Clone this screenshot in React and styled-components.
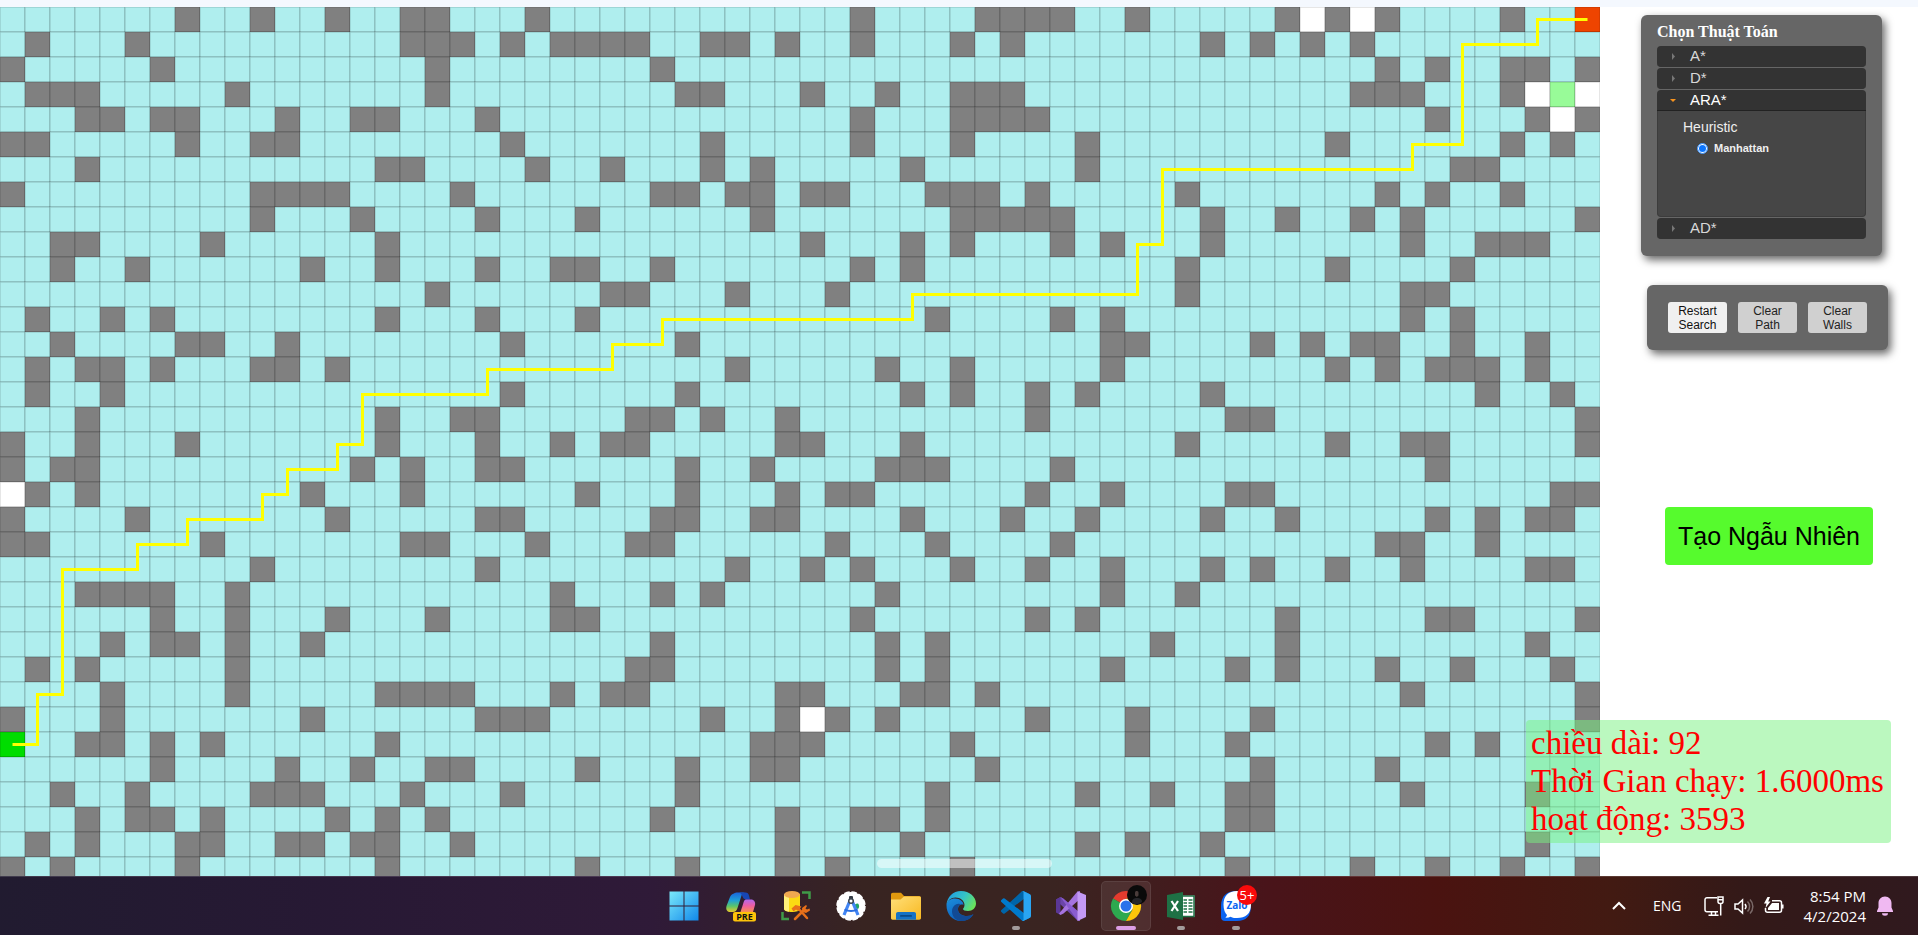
import React, { useState } from 'react';
import styled, { createGlobalStyle, css } from 'styled-components';

const GlobalStyle = createGlobalStyle`
  *, *::before, *::after { box-sizing: border-box; }
  body { margin: 0; background: #fff; overflow: hidden; }
`;

/* ---------- Map data ---------- */

const CELL = 25;
const COLS = 64;

const WALLS = [
  [7, 10, 13, 16, 17, 21, 34, 39, 40, 41, 42, 45, 51, 53, 55, 60],
  [1, 5, 16, 17, 18, 20, 22, 23, 24, 25, 28, 29, 31, 34, 38, 40, 48, 50, 52, 54],
  [0, 6, 17, 26, 55, 57, 60, 61, 63],
  [1, 2, 3, 9, 17, 27, 28, 32, 35, 38, 39, 40, 54, 55, 56, 60],
  [3, 4, 6, 7, 11, 14, 15, 19, 34, 38, 39, 40, 41, 57, 61, 63],
  [0, 1, 7, 10, 11, 20, 28, 34, 38, 43, 53, 60, 62],
  [3, 15, 16, 21, 24, 28, 30, 36, 43, 58, 59],
  [0, 10, 11, 12, 13, 18, 26, 27, 29, 30, 32, 33, 37, 38, 39, 41, 47, 55, 57, 60],
  [10, 14, 19, 23, 30, 38, 39, 40, 41, 42, 48, 51, 54, 56, 63],
  [2, 3, 8, 15, 32, 36, 38, 42, 44, 48, 56, 59, 60, 61],
  [2, 5, 12, 15, 19, 22, 23, 26, 34, 36, 47, 53, 58],
  [17, 24, 25, 29, 33, 47, 56, 57],
  [1, 4, 6, 15, 19, 23, 37, 42, 44, 56, 58],
  [2, 7, 8, 11, 20, 27, 44, 45, 50, 52, 54, 55, 58, 61],
  [1, 3, 4, 6, 10, 11, 13, 29, 35, 38, 44, 53, 55, 57, 58, 59, 61],
  [1, 4, 20, 27, 36, 38, 41, 43, 48, 59, 62],
  [3, 15, 18, 19, 25, 26, 28, 31, 41, 49, 50, 63],
  [0, 3, 7, 15, 19, 22, 24, 25, 31, 32, 36, 47, 53, 56, 57, 63],
  [0, 2, 3, 14, 16, 19, 20, 27, 30, 35, 36, 37, 42, 57],
  [1, 3, 12, 16, 23, 27, 31, 33, 34, 41, 44, 49, 50, 62, 63],
  [0, 5, 13, 19, 20, 26, 27, 30, 31, 36, 40, 43, 48, 51, 57, 59, 61, 62],
  [0, 1, 8, 16, 17, 21, 25, 26, 33, 37, 42, 55, 56, 59],
  [10, 19, 29, 32, 34, 38, 41, 44, 48, 50, 53, 56, 61, 62],
  [3, 4, 5, 6, 9, 22, 26, 28, 35, 44, 47],
  [6, 9, 13, 17, 22, 23, 34, 41, 43, 51, 57, 58, 63],
  [4, 6, 7, 9, 12, 26, 35, 37, 46, 51, 61],
  [1, 3, 9, 25, 26, 35, 37, 44, 49, 51, 55, 58, 62],
  [4, 9, 15, 16, 17, 18, 22, 24, 25, 31, 36, 37, 32, 39, 56, 63],
  [0, 4, 12, 19, 20, 21, 28, 31, 33, 35, 41, 45, 50, 63],
  [3, 4, 6, 8, 15, 30, 31, 32, 38, 45, 49, 57, 59],
  [6, 11, 14, 17, 18, 23, 27, 30, 31, 39, 50, 55],
  [2, 5, 10, 11, 12, 16, 20, 27, 37, 43, 46, 49, 50, 56, 61],
  [3, 5, 6, 8, 13, 15, 17, 26, 31, 34, 35, 37, 49, 50],
  [1, 3, 7, 8, 11, 12, 14, 15, 18, 31, 36, 43, 45, 48, 61],
  [0, 2, 7, 15, 23, 27, 31, 33, 38, 49, 54, 57, 60, 63],
];

const ROWS = WALLS.length;

const SPECIAL = {
  '0,29': '#0d0',
  '63,0': '#e40',
  '62,3': '#98fb98',
  '52,0': '#fff',
  '54,0': '#fff',
  '61,3': '#fff',
  '63,3': '#fff',
  '62,4': '#fff',
  '0,19': '#fff',
  '32,28': '#fff',
};

const PATH = [
  [0, 29], [1, 29], [1, 27], [2, 27], [2, 22], [5, 22], [5, 21], [7, 21], [7, 20],
  [10, 20], [10, 19], [11, 19], [11, 18], [13, 18], [13, 17], [14, 17], [14, 15],
  [19, 15], [19, 14], [24, 14], [24, 13], [26, 13], [26, 12], [36, 12], [36, 11],
  [45, 11], [45, 9], [46, 9], [46, 6], [56, 6], [56, 5], [58, 5], [58, 1], [61, 1],
  [61, 0], [63, 0],
];

function cellColor(x, y) {
  if (SPECIAL[`${x},${y}`]) return SPECIAL[`${x},${y}`];
  return WALLS[y].includes(x) ? '#808080' : '#afeeee';
}

/* ---------- Page ---------- */

const Page = styled.div`
  display: flex;
  flex-direction: column;
  height: 100vh;
`;

const TopStrip = styled.div`
  flex: none;
  height: 7px;
  background: #f4f8fe;
`;

const Main = styled.main`
  position: relative;
  display: flex;
  flex: 1;
  min-height: 0;
  overflow: hidden;
`;

const MapArea = styled.section`
  flex: 1;
  min-width: 0;
  overflow: hidden;
`;

const MapDrawing = styled.svg`
  display: block;
  overflow: visible;
`;

const ScrollHandle = styled.div`
  position: absolute;
  bottom: 8px;
  left: calc(50% - 82px);
  width: 175px;
  height: 9px;
  border-radius: 5px;
  background: rgba(255, 255, 255, 0.5);
`;

const Sidebar = styled.aside`
  position: relative;
  display: flex;
  flex: 0 0 318px;
  flex-direction: column;
  align-items: flex-start;
  padding: 8px 0 0 41px;
  background: #fff;
`;

const panel = css`
  background: #666;
  border-radius: 6px;
  box-shadow: 3px 4px 8px rgba(0, 0, 0, 0.6);
`;

const AlgorithmPanel = styled.section`
  ${panel}
  width: 241px;
  padding: 8px 16px 17px;
`;

const PanelTitle = styled.h1`
  margin: 0 0 5px;
  color: #fff;
  font: bold 16px/18px 'Liberation Serif', serif;
`;

const Accordion = styled.div`
  display: flex;
  flex-direction: column;
  gap: 1px;
  font-family: 'Liberation Sans', sans-serif;
`;

const AccordionHeader = styled.button`
  display: flex;
  align-items: center;
  width: 100%;
  height: 21px;
  padding: 0 0 0 12px;
  border: 0;
  border-bottom: 1px solid ${(p) => (p.$open ? '#222' : '#333')};
  border-radius: ${(p) => (p.$open ? '4px 4px 0 0' : '4px')};
  background: #333;
  color: ${(p) => (p.$open ? '#fff' : '#d8d8d8')};
  font: 15px/18px 'Liberation Sans', sans-serif;
  cursor: pointer;
`;

const Caret = styled.svg`
  flex: none;
  width: 8px;
  height: 8px;
  margin-right: 13px;
  fill: ${(p) => (p.$open ? '#f7931e' : '#777')};
`;

const AccordionBody = styled.div`
  height: 106px;
  padding: 7px 25px;
  border: 1px solid #3c3c3c;
  border-top: 0;
  border-radius: 0 0 4px 4px;
  background: #464646;
  color: #eee;
`;

const OptionTitle = styled.h2`
  margin: 0 0 5px;
  font: 14px/18px 'Liberation Sans', sans-serif;
`;

const OptionLabel = styled.label`
  display: flex;
  align-items: center;
  gap: 6px;
  padding-left: 14px;
  font: bold 11px/14px 'Liberation Sans', sans-serif;
`;

const Radio = styled.input`
  appearance: none;
  width: 11px;
  height: 11px;
  margin: 0;
  border: 1px solid #5aa5ff;
  border-radius: 50%;
  background: #0b75ff;
  box-shadow: inset 0 0 0 1px #fff;
`;

const ActionPanel = styled.section`
  ${panel}
  display: flex;
  gap: 11px;
  width: 241px;
  margin: 29px 0 0 6px;
  padding: 17px 21px;
`;

const ActionButton = styled.button`
  flex: 1;
  height: 31px;
  padding: 0;
  border: 0;
  border-radius: 3px;
  background: ${(p) => (p.$primary ? '#f0f0f0' : '#d0d0d0')};
  color: ${(p) => (p.$primary ? '#111' : '#222')};
  font: 12px/14px 'Liberation Sans', sans-serif;
`;

const RandomButton = styled.button`
  width: 208px;
  height: 58px;
  margin: 157px 0 0 24px;
  padding: 0;
  border: 0;
  border-radius: 4px;
  background: #56fb2d;
  color: #000;
  font: 25px/30px 'Liberation Sans', sans-serif;
`;

const Stats = styled.div`
  position: absolute;
  right: 27px;
  bottom: 33px;
  width: 365px;
  padding: 4px 5px 5px;
  border-radius: 4px;
  background: rgba(120, 241, 128, 0.5);
  color: #f00;
  font: 33px/38px 'Liberation Serif', serif;
  white-space: nowrap;
`;

const StatLine = styled.p`
  margin: 0;
`;

/* ---------- Taskbar ---------- */

const Taskbar = styled.footer`
  display: grid;
  grid-template-columns: 1fr auto 1fr;
  align-items: center;
  flex: none;
  height: 59px;
  border-top: 1px solid rgba(255, 255, 255, 0.14);
  background: linear-gradient(
    90deg, #211b30 0%, #271934 17%, #2f1a38 34%, #382421 45%, #3a2421 55%,
    #49141a 66%, #4a1310 75%, #421a12 84%, #331918 91%, #30191e 100%
  );
  color: #fff;
  font-family: 'Open Sans', 'Noto Sans', sans-serif;
`;

const AppList = styled.nav`
  display: flex;
  grid-column: 2;
  gap: 5px;
  padding-left: 2px;
`;

const AppButton = styled.button`
  position: relative;
  display: flex;
  align-items: center;
  justify-content: center;
  width: 50px;
  height: 50px;
  padding: 0;
  border: 1px solid ${(p) => (p.$state === 'active' ? 'rgba(255,255,255,0.08)' : 'transparent')};
  border-radius: 5px;
  background: ${(p) => (p.$state === 'active' ? 'rgba(255,255,255,0.08)' : 'transparent')};

  &:first-child {
    margin-right: 2px;
  }

  &::after {
    content: '';
    display: ${(p) => (p.$state ? 'block' : 'none')};
    position: absolute;
    bottom: 0;
    width: ${(p) => (p.$state === 'active' ? '20px' : '8px')};
    height: 4px;
    border-radius: 2px;
    background: ${(p) => (p.$state === 'active' ? '#dc9ee6' : '#a39b9b')};
  }
`;

const AppIcon = styled.svg`
  width: 30px;
  height: 30px;
  overflow: visible;
`;

const AppBadge = styled.span`
  position: absolute;
  top: 3px;
  right: 3px;
  width: 20px;
  height: 20px;
  border-radius: 50%;
  background: #f80b0b;
  color: #fff;
  font: 13px/20px 'Open Sans', sans-serif;
  text-align: center;
`;

const Tray = styled.div`
  display: flex;
  grid-column: 3;
  align-items: center;
  justify-self: end;
  padding-right: 24px;
`;

const TrayButton = styled.button`
  display: flex;
  align-items: center;
  gap: ${(p) => p.$inner || 10}px;
  margin: 0 0 0 ${(p) => p.$gap}px;
  padding: 0;
  border: 0;
  background: none;
  color: #fff;
  font: ${(p) => p.$size || 14}px/20px 'Open Sans', 'Noto Sans', sans-serif;
  text-align: right;
`;

const TrayIcon = styled.svg`
  width: ${(p) => p.$w || 20}px;
  height: 20px;
  fill: none;
  stroke: #fff;
  stroke-width: 1.5;
`;

const APPS = [
  {
    name: 'Start',
    icon: (
      <>
        <defs>
          <linearGradient id="win" gradientUnits="userSpaceOnUse" x1="0" y1="0" x2="30" y2="30">
            <stop offset="0" stopColor="#7cebfb" />
            <stop offset="1" stopColor="#0f86ea" />
          </linearGradient>
        </defs>
        <path fill="url(#win)" d="M.5 .5h14v14h-14zM15.5 .5h14v14h-14zM.5 15.5h14v14h-14zM15.5 15.5h14v14h-14z" />
      </>
    ),
  },
  {
    name: 'Copilot',
    icon: (
      <>
        <defs>
          <linearGradient id="cpA" x1="0" y1="0" x2="0" y2="1">
            <stop offset="0" stopColor="#1a66dd" />
            <stop offset=".4" stopColor="#1fa0d8" />
            <stop offset=".7" stopColor="#5ac46b" />
            <stop offset="1" stopColor="#e9c929" />
          </linearGradient>
          <linearGradient id="cpB" x1="0" y1="0" x2="0" y2="1">
            <stop offset="0" stopColor="#b268ee" />
            <stop offset=".5" stopColor="#ee5ea1" />
            <stop offset="1" stopColor="#f79050" />
          </linearGradient>
        </defs>
        <path fill="url(#cpA)" d="M8 2.500c1-.8 2-1 3.500-1h8c-2.500 0-3.500 1.500-4.300 4L11.500 17c-.8 2.700-2 4-4.500 4H4.500c-3 0-5-2-4-6L4 6c.8-2 2-3 4-3.500z" />
        <path fill="#1746b4" d="M12 1.500h7.500c2 0 3 1.200 3.500 3l1 4h-3c-2 0-3.500-.5-4.300-2.500-.8-2.500-2-4.500-4.700-4.500z" />
        <path fill="url(#cpB)" d="M20 8.500h5c3 0 4.700 2.500 4 5.500L27 21H14.500l3.200-10c.5-1.500 1-2.500 2.300-2.500z" />
        <rect x="7" y="21" width="23" height="9.500" rx="2" fill="#fdc30a" />
        <text x="18.500" y="29" textAnchor="middle" fontFamily="Open Sans, sans-serif" fontWeight="700" fontSize="9" fill="#111">PRE</text>
      </>
    ),
  },
  {
    name: 'SQL Server Data Tools',
    icon: (
      <>
        <path fill="#fbd913" d="M3 3v15c0 2 4 3 8 3s8-1 8-3V3z" />
        <path fill="#fff07a" d="M3 3v15c0 1.200 2 2.300 5 2.700V3z" />
        <ellipse cx="11" cy="3.500" rx="8" ry="3.500" fill="#f0a850" />
        <path fill="none" stroke="#3f9b48" strokeWidth="2.500" d="M21 1.500h7.500V8M1.500 21v7H8" />
        <path fill="none" stroke="#e8701a" strokeWidth="2.500" strokeLinecap="round" d="M14 28l9-9M17 17l9 10" />
        <path fill="#e8701a" d="M10.500 17.500l4-3.500 6 1.500-3.500 4.500-2-1.500-2.500 2zM21 17l4-3 1 1-1.500 2.500 1.500 1 2.500-1 .5 2-4 2.500-3.500-1z" />
      </>
    ),
  },
  {
    name: 'Android Studio',
    icon: (
      <>
        <circle cx="15" cy="15" r="14" fill="#fff" />
        <circle cx="15" cy="15" r="14" fill="none" stroke="#fff" strokeWidth="1.500" strokeDasharray="5.500 1.830" />
        <path fill="#21a565" d="M18 16.500a4 4 0 0 1 4-4c1.500 1.500 1.500 4 0 5.500z" />
        <path fill="none" stroke="#4285f4" strokeWidth="3.200" d="M13.800 10L8 24M16.200 10L22 24" />
        <path fill="none" stroke="#2a6de0" strokeWidth="2" d="M8.500 18.500c3.500 2 9.500 2 13 0" />
        <rect x="13" y="5" width="4" height="4" rx="1" fill="#333a44" />
        <circle cx="15" cy="10" r="3" fill="#3c4650" />
        <circle cx="15" cy="10" r="1.500" fill="#fff" />
      </>
    ),
  },
  {
    name: 'File Explorer',
    icon: (
      <>
        <defs>
          <linearGradient id="fold" x1="0" y1="0" x2="1" y2="1">
            <stop offset="0" stopColor="#ffe07a" />
            <stop offset="1" stopColor="#f8b820" />
          </linearGradient>
        </defs>
        <path fill="#e0990f" d="M0 3.500C0 2.500.8 1.800 1.800 1.800H10l3 3.200h15c1 0 2 .8 2 2v6H0z" />
        <path fill="url(#fold)" d="M0 8.500h9.500L13 5.500h15.500c.8 0 1.500.6 1.500 1.500v20c0 1-.8 1.700-1.700 1.700H1.700C.7 28.700 0 28 0 27z" />
        <path fill="#1672c4" d="M5 28.700V23c0-1.200.8-2 2-2h16c1.200 0 2 .8 2 2v5.700z" />
        <rect x="9" y="24" width="12" height="1.800" rx=".9" fill="#0b4a86" />
      </>
    ),
  },
  {
    name: 'Edge',
    icon: (
      <>
        <defs>
          <linearGradient id="edA" x1="0" y1=".2" x2="1" y2=".6">
            <stop offset="0" stopColor="#1f9be2" />
            <stop offset=".55" stopColor="#35c4c6" />
            <stop offset="1" stopColor="#6be35a" />
          </linearGradient>
          <linearGradient id="edB" x1="0" y1="0" x2=".6" y2="1">
            <stop offset="0" stopColor="#1b8ede" />
            <stop offset="1" stopColor="#0c5cb8" />
          </linearGradient>
        </defs>
        <path fill="url(#edB)" d="M.5 14C1 10 4.500 7.500 9 7.500c5 0 8.500 3 8.500 6.500-1.500-1-5.500-.5-5.500 4.500 0 4 4 6.500 9 6.500 3 0 5-1 6.500-2C25 27.500 20.500 30 15 30 6.500 30 .3 23 .5 14z" />
        <path fill="#124a94" d="M12 18.500c-.2-3 1.200-5 3-5.200-3.500-2-9 1-9 7.200 0 5 4 9.500 9.500 9.500 5 0 9.500-2.500 12-7-1.500 1-3.500 2-6.500 2-5 0-9-2.500-9-6.500z" />
        <path fill="url(#edA)" d="M.5 14C1 6 7 0 15 0c8.500 0 15 6 15 12.500 0 4.500-3.500 7.500-8 7.500-3 0-5-1-5-2 0-.8 1.500-1.500 1.500-4 0-4-4-7.500-9-7.500-4.500 0-8 3-9 7.500z" />
      </>
    ),
  },
  {
    name: 'Visual Studio Code',
    state: 'open',
    icon: (
      <g transform="scale(.3)">
        <path fill="#0065a9" d="M96.460 10.800 75.860.88a6.230 6.230 0 0 0-7.100 1.200L1.300 63.580a4.170 4.170 0 0 0 0 6.170l5.510 5.010a4.170 4.170 0 0 0 5.320.24l81.230-61.620c2.730-2.070 6.640-.13 6.640 3.300v-.24a6.250 6.250 0 0 0-3.540-5.640Z" />
        <path fill="#007acc" d="M96.460 89.200 75.860 99.120a6.230 6.230 0 0 1-7.100-1.210L1.300 36.420a4.170 4.170 0 0 1 0-6.170l5.510-5.010a4.170 4.170 0 0 1 5.320-.24l81.230 61.620c2.730 2.070 6.640.13 6.640-3.300v.24a6.250 6.250 0 0 1-3.540 5.640Z" />
        <path fill="#2aa5f2" d="M75.860 99.130a6.230 6.230 0 0 1-7.100-1.210c2.300 2.300 6.240.67 6.240-2.590V4.670c0-3.260-3.940-4.890-6.250-2.580a6.230 6.230 0 0 1 7.100-1.210l20.600 9.900A6.250 6.250 0 0 1 100 16.420v67.150a6.250 6.250 0 0 1-3.540 5.640l-20.600 9.920Z" />
      </g>
    ),
  },
  {
    name: 'Visual Studio',
    icon: (
      <>
        <path fill="#6b46a8" d="M0 8.500L4.500 6l3 1.800L21.500 20v9.500L4 13v9l-4-1.500z" />
        <path fill="#5a3796" d="M0 8.500L4.500 6v18L0 21.500z" />
        <path fill="#a674e0" d="M4.500 24L3 22.500 21.500.5 24 0v8L7.500 22.500z" />
        <path fill="#8a5cd0" d="M4.500 6l3 1.800L24 22v8l-2.500-.5z" />
        <path fill="#c49af5" d="M21.500.5L30 4v22l-8.500 4z" />
      </>
    ),
  },
  {
    name: 'Chrome',
    state: 'active',
    icon: (
      <>
        <path fill="#e33b2e" d="M15 15L2 7.500a15 15 0 0 1 26 0H15z" />
        <path fill="#2da94f" d="M15 15L2 7.500A15 15 0 0 0 15 30l6.500-11.250z" />
        <path fill="#fdc60a" d="M28 7.500H15l6.500 11.250L15 30A15 15 0 0 0 28 7.500z" />
        <circle cx="15" cy="15" r="7" fill="#fff" />
        <circle cx="15" cy="15" r="5.500" fill="#2a72ea" />
        <circle cx="26" cy="4" r="10" fill="#0a0a0a" />
        <path fill="#4a3c3a" d="M24 1.500c0-2 3.500-2 3.500 0v3l-1.700 1.500L24 4.500z" />
        <path fill="#26262a" d="M21 12c0-4 2-5 5-5s5 1 5 4a9 9 0 0 1-10 1z" />
      </>
    ),
  },
  {
    name: 'Excel',
    state: 'open',
    icon: (
      <>
        <rect x="14" y="4.500" width="14.500" height="21.500" fill="#fff" />
        <path stroke="#1e7145" strokeWidth="1.500" fill="none" d="M14 5h14v20.500H14M17.500 9h3.500M22.500 9h4M17.500 12h3.500M22.500 12h4M17.500 15h3.500M22.500 15h4M17.500 18h3.500M22.500 18h4M17.500 21h3.500M22.500 21h4" />
        <path fill="#1e7145" d="M1 4l16-3v28L1 26z" />
        <path fill="none" stroke="#fff" strokeWidth="2.200" d="M5.500 10l6.500 10M12 10L5.500 20" />
      </>
    ),
  },
  {
    name: 'Zalo',
    state: 'open',
    badge: '5+',
    icon: (
      <>
        <path fill="#0a63f0" d="M15 0C6 0 0 5 0 15v11c0 2.500 1.500 4 4 4h12c9 0 14-5 14-15S24 0 15 0z" />
        <path fill="#fff" d="M16 0C7.500 0 2.500 5 2.500 13.500c0 5 1.500 8.500 3.500 10.500-.2 1.300-.8 2-1.800 2.600 2 .2 3.800-.1 5.300-.9C12 27 14 27 16 27c8.500 0 14-4 14-13.500S24.500 0 16 0z" />
        <text x="16" y="18" textAnchor="middle" fontFamily="Open Sans, sans-serif" fontWeight="700" fontSize="10" fill="#0a63f0">Zalo</text>
      </>
    ),
  },
];

const HEURISTICS = ['Manhattan'];
const ALGORITHMS = ['A*', 'D*', 'ARA*', 'AD*'];

function GridMap() {
  const cells = [];
  for (let y = 0; y < ROWS; y += 1) {
    for (let x = 0; x < COLS; x += 1) {
      cells.push(
        <rect key={`${x},${y}`} x={x * CELL} y={y * CELL} width={CELL} height={CELL} fill={cellColor(x, y)} />
      );
    }
  }
  const points = PATH.map(([x, y]) => `${x * CELL + CELL / 2},${y * CELL + CELL / 2}`).join(' ');
  return (
    <MapDrawing width={COLS * CELL} height={ROWS * CELL} role="img" aria-label="Grid map">
      <g stroke="#000" strokeOpacity="0.2">{cells}</g>
      <polyline points={points} fill="none" stroke="yellow" strokeWidth="3" />
    </MapDrawing>
  );
}

export default function App() {
  const [open, setOpen] = useState('ARA*');
  const [heuristic, setHeuristic] = useState('Manhattan');

  return (
    <Page>
      <GlobalStyle />
      <TopStrip />
      <Main>
        <MapArea>
          <GridMap />
        </MapArea>
        <Sidebar>
          <AlgorithmPanel>
            <PanelTitle>Chọn Thuật Toán</PanelTitle>
            <Accordion>
              {ALGORITHMS.map((name) => {
                const isOpen = name === open;
                return (
                  <div key={name}>
                    <AccordionHeader $open={isOpen} aria-expanded={isOpen} onClick={() => setOpen(name)}>
                      <Caret $open={isOpen} viewBox="0 0 8 8" aria-hidden="true">
                        <path d={isOpen ? 'M1 3h6L4 6z' : 'M3 1v7l3-3.500z'} />
                      </Caret>
                      {name}
                    </AccordionHeader>
                    {isOpen && (
                      <AccordionBody>
                        <OptionTitle>Heuristic</OptionTitle>
                        {HEURISTICS.map((h) => (
                          <OptionLabel key={h}>
                            <Radio
                              type="radio"
                              name="heuristic"
                              checked={heuristic === h}
                              onChange={() => setHeuristic(h)}
                            />
                            {h}
                          </OptionLabel>
                        ))}
                      </AccordionBody>
                    )}
                  </div>
                );
              })}
            </Accordion>
          </AlgorithmPanel>
          <ActionPanel>
            <ActionButton $primary>Restart<br />Search</ActionButton>
            <ActionButton>Clear<br />Path</ActionButton>
            <ActionButton>Clear<br />Walls</ActionButton>
          </ActionPanel>
          <RandomButton>Tạo Ngẫu Nhiên</RandomButton>
        </Sidebar>
        <Stats>
          <StatLine>chiều dài: 92</StatLine>
          <StatLine>Thời Gian chạy: 1.6000ms</StatLine>
          <StatLine>hoạt động: 3593</StatLine>
        </Stats>
        <ScrollHandle />
      </Main>
      <Taskbar>
        <AppList aria-label="Apps">
          {APPS.map((app) => (
            <AppButton key={app.name} $state={app.state} aria-label={app.name}>
              <AppIcon viewBox="0 0 30 30" aria-hidden="true">{app.icon}</AppIcon>
              {app.badge && <AppBadge>{app.badge}</AppBadge>}
            </AppButton>
          ))}
        </AppList>
        <Tray>
          <TrayButton $gap={0} aria-label="Show hidden icons">
            <TrayIcon $w={14} viewBox="0 0 14 20">
              <path strokeWidth="2" d="M1 13l6-6 6 6" />
            </TrayIcon>
          </TrayButton>
          <TrayButton $gap={27}>ENG</TrayButton>
          <TrayButton $gap={22} aria-label="Network, volume and battery">
            <TrayIcon viewBox="0 0 20 20">
              <path d="M13 1.700H3a2 2 0 0 0-2 2v10a2 2 0 0 0 2 2h11M7.500 16v3M11.500 16v3M4.500 19.200h10M14 1h5v4.500a2 2 0 0 1-2 2h-1a2 2 0 0 1-2-2zM16.700 8v11.500M14 3.700h5" />
            </TrayIcon>
            <TrayIcon viewBox="0 0 20 20">
              <path d="M1 8v5h3l4.500 4V4L4 8zM11 8a4 4 0 0 1 0 5" />
              <path strokeOpacity=".35" d="M13.500 5.500a7 7 0 0 1 0 10M16 3.500a10 10 0 0 1 0 14" />
            </TrayIcon>
            <TrayIcon viewBox="0 0 20 20">
              <path d="M8 4.700h7.500a2 2 0 0 1 2 2v7.600a2 2 0 0 1-2 2h-12a2 2 0 0 1-2-2V12M18.800 8.500v4" />
              <path fill="#fff" stroke="none" d="M8 7h7v7H4v-2zM3.500 1L0 7.500h2.500L1.500 12l5-6.500H4.200L6 1z" />
            </TrayIcon>
          </TrayButton>
          <TrayButton $gap={20} $size={15}>
            <span>8:54 PM<br />4/2/2024</span>
            <TrayIcon $w={18} viewBox="0 0 18 20" aria-hidden="true">
              <path fill="#f0b9f2" stroke="none" d="M9 .5C5 .5 2.500 3.500 2.500 7v4.500L1 15v1h16v-1l-1.500-3.500V7C15.500 3.500 13 .5 9 .5zM6 17.200h6a3 2.500 0 0 1-6 0z" />
            </TrayIcon>
          </TrayButton>
        </Tray>
      </Taskbar>
    </Page>
  );
}
